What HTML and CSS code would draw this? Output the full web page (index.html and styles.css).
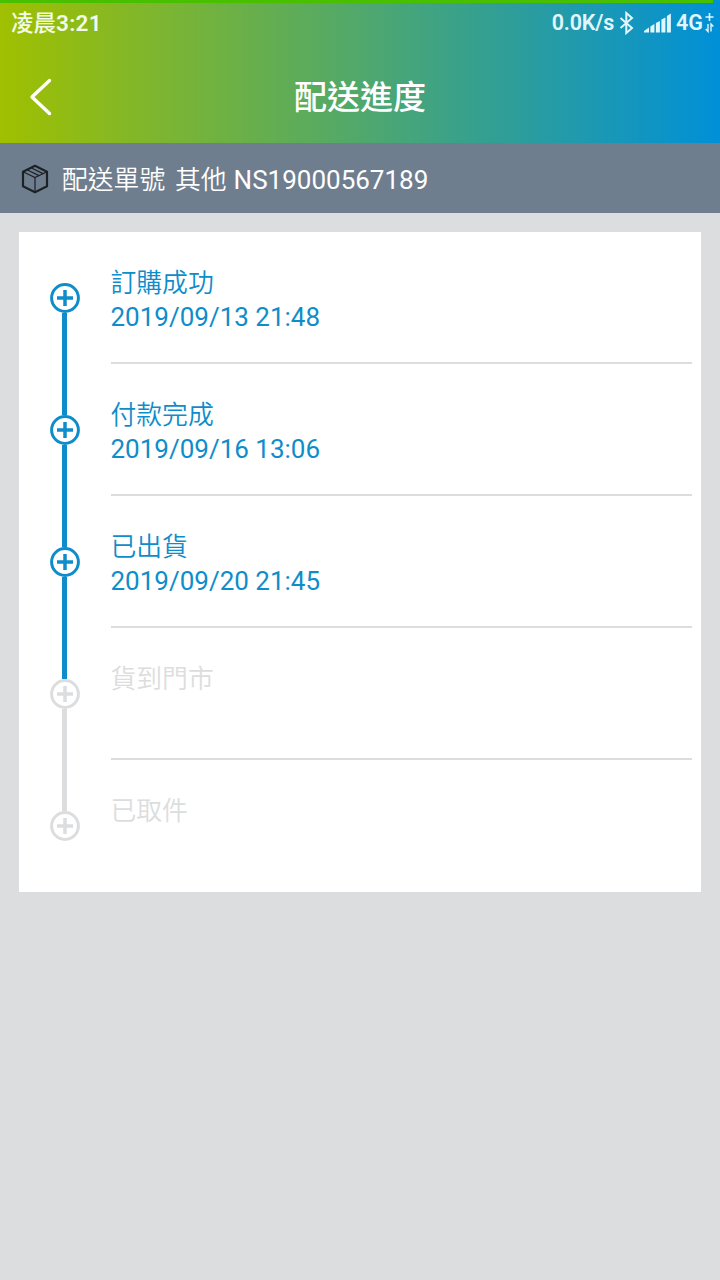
FILE: index.html
```html
<!DOCTYPE html>
<html lang="zh-Hant">
<head>
    <meta charset="UTF-8">
    <meta name="viewport" content="width=device-width, initial-scale=1.0">
    <title>配送進度</title>
    <link rel="stylesheet" href="styles.css">
</head>
<body>
    <!-- Shared plus marker -->
    <svg class="symbols" width="0" height="0">
        <symbol id="node" viewBox="0 0 30 30">
            <circle cx="15" cy="15" r="13.4" fill="none" stroke="currentColor" stroke-width="3" />
            <path d="M7 15h16M15 7v16" fill="none" stroke="currentColor" stroke-width="3.5" />
        </symbol>
    </svg>

    <header class="header">
        <div class="loading-bar"></div>

        <!-- Status bar -->
        <div class="status-bar">
            <span class="status-time">凌晨<b>3:21</b></span>
            <div class="status-right">
                <span class="status-speed">0.0K/s</span>
                <svg class="icon-bluetooth" width="15" height="24" viewBox="0 0 15 24">
                    <path d="M1.5 7l11.500 10-5.700 5V2L13 7 1.500 17" fill="none" stroke="currentColor" stroke-width="2" />
                </svg>
                <svg class="icon-signal" width="28" height="20" viewBox="0 0 28 20">
                    <path d="M0 19.500v-1.500l5-3.500v5zM6.400 19.500v-6l4-2.500v8.500zM11.900 19.500v-9.500l4-2v11.500zM17.400 19.500v-13l4-2v15zM22.900 19.500V3l4-2.500v19z" fill="currentColor" />
                </svg>
                <span class="status-network">4G</span>
                <svg class="icon-data" width="9" height="20" viewBox="0 0 9 20">
                    <path d="M4.500 0v8M.5 4h8" fill="none" stroke="currentColor" stroke-width="1.600" />
                    <path d="M3 11v7.500L.7 16M6 18.500V11l2.300 2.500" fill="none" stroke="currentColor" stroke-width="1.400" />
                </svg>
            </div>
        </div>

        <!-- Title bar -->
        <div class="title-bar">
            <svg class="icon-back" width="24" height="40" viewBox="0 0 24 40">
                <path d="M20.500 3.500L3 20l17.500 16.500" fill="none" stroke="currentColor" stroke-width="3.400" stroke-linecap="round" stroke-linejoin="round" />
            </svg>
            <h1>配送進度</h1>
        </div>
    </header>

    <div class="order-bar">
        <svg class="icon-box" width="28" height="30" viewBox="0 0 28 30">
            <path d="M14 1.800l12 6v14.400l-12 6-12-6V7.800z" fill="none" stroke="currentColor" stroke-width="2.200" stroke-linejoin="round" />
            <path d="M2 7.800l12 5.700 12-5.700M14 13.500V28M6 5.800l12 5.800M10 3.800l12 5.800" fill="none" stroke="currentColor" stroke-width="1.200" />
        </svg>
        <span class="order-label">配送單號 其他</span>
        <span class="order-number">NS19000567189</span>
    </div>

    <ul class="timeline">
        <li class="step done">
            <div class="rail">
                <span class="line line-none"></span>
                <svg class="node"><use href="#node" /></svg>
                <span class="line"></span>
            </div>
            <div class="step-body">
                <div class="step-title">訂購成功</div>
                <div class="step-date">2019/09/13 21:48</div>
            </div>
        </li>
        <li class="step done">
            <div class="rail">
                <span class="line"></span>
                <svg class="node"><use href="#node" /></svg>
                <span class="line"></span>
            </div>
            <div class="step-body">
                <div class="step-title">付款完成</div>
                <div class="step-date">2019/09/16 13:06</div>
            </div>
        </li>
        <li class="step done">
            <div class="rail">
                <span class="line"></span>
                <svg class="node"><use href="#node" /></svg>
                <span class="line"></span>
            </div>
            <div class="step-body">
                <div class="step-title">已出貨</div>
                <div class="step-date">2019/09/20 21:45</div>
            </div>
        </li>
        <li class="step">
            <div class="rail">
                <span class="line line-done"></span>
                <svg class="node"><use href="#node" /></svg>
                <span class="line"></span>
            </div>
            <div class="step-body">
                <div class="step-title">貨到門市</div>
            </div>
        </li>
        <li class="step">
            <div class="rail">
                <span class="line"></span>
                <svg class="node"><use href="#node" /></svg>
                <span class="line line-none"></span>
            </div>
            <div class="step-body">
                <div class="step-title">已取件</div>
            </div>
        </li>
    </ul>
</body>
</html>
```

FILE: styles.css
```css
* {
    box-sizing: border-box;
}

body {
    margin: 0;
    min-height: 1280px;
    background-color: #dcdddf;
    font-family: Roboto, "Noto Sans CJK TC", sans-serif;
}

svg {
    display: block;
    flex: none;
}

.symbols {
    position: absolute;
}

/* Header */
.header {
    height: 143px;
    background: linear-gradient(90deg, #a0c000, #0090d8);
    color: #fff;
}

.loading-bar {
    width: 713px;
    height: 3px;
    background-color: #48c000;
}

.status-bar {
    display: flex;
    justify-content: space-between;
    align-items: center;
    height: 40px;
    padding: 0 6px 0 11px;
    color: #f0fbe8;
    font-size: 22.5px;
    font-weight: 500;
    line-height: 40px;
}

.status-time b {
    font-weight: 600;
    letter-spacing: 0.3px;
}

.status-right {
    display: flex;
    align-items: center;
    color: #e0f7ff;
    font-size: 21.5px;
    font-weight: 600;
}

.status-speed {
    letter-spacing: -0.2px;
}

.icon-bluetooth {
    margin-left: 5px;
}

.icon-signal {
    margin-left: 10px;
}

.status-network {
    margin-left: 4px;
}

.icon-data {
    margin-left: 2px;
}

.title-bar {
    display: grid;
    grid-template-columns: 60px 1fr 60px;
    align-items: center;
    height: 100px;
    padding-top: 8px;
}

.icon-back {
    margin-left: 29px;
}

h1 {
    margin: 0;
    padding-top: 2px;
    font-size: 33px;
    font-weight: 500;
    line-height: 48px;
    text-align: center;
}

/* Order number */
.order-bar {
    display: flex;
    align-items: center;
    height: 70px;
    padding: 2px 21px 0;
    background-color: #6f7e8e;
    color: #fff;
    font-size: 26px;
    line-height: 36px;
}

.icon-box {
    color: #1c2126;
}

.order-label {
    margin-left: 13px;
    padding-top: 2px;
    font-size: 25.8px;
    font-weight: 350;
    word-spacing: 3.5px;
}

.order-number {
    margin-left: 7px;
    padding-top: 1px;
}

/* Delivery steps */
.timeline {
    margin: 19px 19px 0 18.5px;
    padding: 0 9.5px 0 31px;
    background-color: #fff;
    list-style: none;
}

.step {
    display: flex;
    height: 132px;
    color: #dcddde;
}

.done {
    color: #0f8dca;
}

.rail {
    display: flex;
    flex-direction: column;
    align-items: center;
    width: 30px;
}

.node {
    width: 30px;
    height: 30px;
}

.line {
    flex: 1;
    width: 5.5px;
    background-color: currentColor;
}

.line-done {
    background-color: #0f8dca;
}

.line-none {
    background-color: transparent;
}

.step-body {
    flex: 1;
    margin-left: 31px;
    padding-top: 34px;
    border-bottom: 2px solid #dcddde;
    font-size: 26px;
    line-height: 35px;
}

.step:last-child .step-body {
    border-bottom: none;
}

.step-title {
    font-size: 25.8px;
    font-weight: 350;
    line-height: 34px;
}
```
